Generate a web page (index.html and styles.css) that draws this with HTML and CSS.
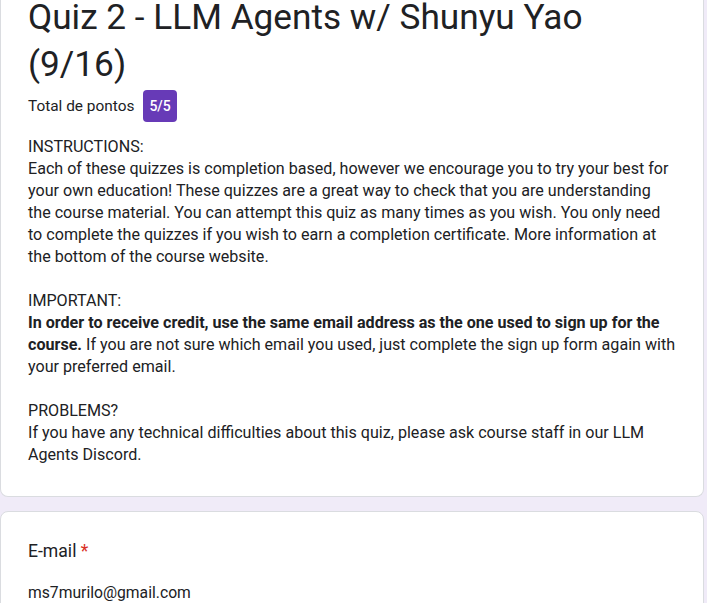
FILE: index.html
```html
<!DOCTYPE html>
<html lang="pt">
<head>
<meta charset="utf-8">
<title>Quiz 2 - LLM Agents w/ Shunyu Yao (9/16)</title>
<link rel="stylesheet" href="styles.css">
</head>
<body>
<div class="page">
  <section class="card header-card">
    <h1 class="title">Quiz 2 - LLM Agents w/ Shunyu Yao (9/16)</h1>
    <div class="score-row">
      <span class="score-label">Total de pontos</span>
      <span class="badge">5/5</span>
    </div>
    <div class="desc">
      <p>INSTRUCTIONS:<br>Each of these quizzes is completion based, however we encourage you to try your best for your own education! These quizzes are a great way to check that you are understanding the course material. You can attempt this quiz as many times as you wish. You only need to complete the quizzes if you wish to earn a completion certificate. More information at the bottom of the course website.</p>
      <p>IMPORTANT:<br><b>In order to receive credit, use the same email address as the one used to sign up for the course.</b> If you are not sure which email you used, just complete the sign up form again with your preferred email.</p>
      <p>PROBLEMS?<br>If you have any technical difficulties about this quiz, please ask course staff in our LLM Agents Discord.</p>
    </div>
  </section>
  <section class="card question-card">
    <div class="q-title">E-mail <span class="req">*</span></div>
    <div class="q-answer">ms7murilo@gmail.com</div>
  </section>
</div>
</body>
</html>
```
FILE: styles.css
```css
html, body {
  margin: 0;
  padding: 0;
  background: #f0ebf8;
  height: 100%;
  overflow: hidden;
}
body {
  font-family: Roboto, "Noto Sans", Arial, sans-serif;
  color: #202124;
}
.page {
  width: 704px;
  display: flex;
  flex-direction: column;
  gap: 14px;
}
.card {
  background: #fff;
  border: 1px solid #dadce0;
  border-radius: 8px;
  padding: 0 27px;
}
.header-card {
  border-top: none;
  border-top-left-radius: 0;
  border-top-right-radius: 0;
  padding-bottom: 30px;
}
.title {
  margin: -6px 0 0 0;
  font-size: 35.2px;
  font-weight: 400;
  line-height: 47px;
  letter-spacing: 0;
}
.score-row {
  display: flex;
  align-items: center;
  gap: 9px;
  margin-top: 2px;
}
.score-label {
  font-size: 15.4px;
  line-height: 22px;
}
.badge {
  background: #673ab7;
  color: #fff;
  font-size: 14px;
  font-weight: 500;
  height: 32px;
  padding: 0 6px;
  border-radius: 4px;
  display: flex;
  align-items: center;
}
.desc {
  margin-top: 14px;
  font-size: 16.1px;
  line-height: 22px;
}
.desc p {
  margin: 0 0 22px 0;
}
.desc p:last-child {
  margin-bottom: 0;
}
.question-card {
  padding-top: 26px;
  padding-bottom: 30px;
}
.q-title {
  font-size: 17.6px;
  line-height: 26px;
}
.req {
  color: #d93025;
}
.q-answer {
  margin-top: 18px;
  font-size: 15.7px;
  line-height: 22px;
}
```
